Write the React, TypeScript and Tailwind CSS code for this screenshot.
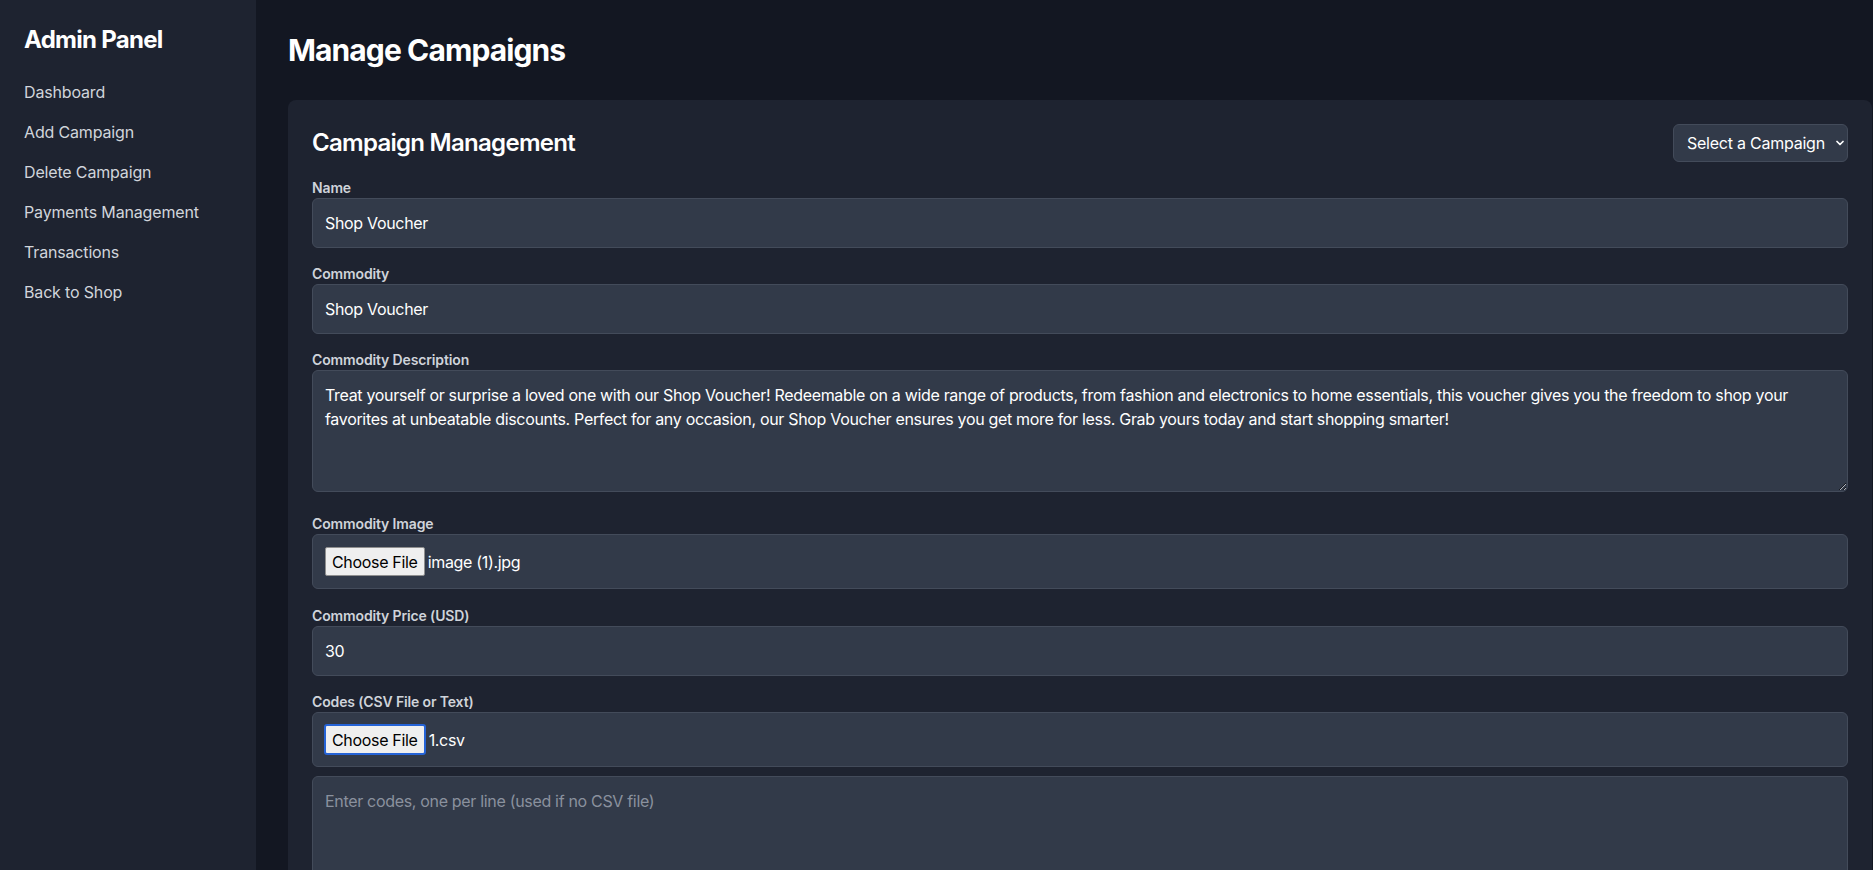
import { ChevronDown } from "lucide-react";

const description =
  "Treat yourself or surprise a loved one with our Shop Voucher! Redeemable on a wide range of products, from fashion and electronics to home essentials, this voucher gives you the freedom to shop your favorites at unbeatable discounts. Perfect for any occasion, our Shop Voucher ensures you get more for less. Grab yours today and start shopping smarter!";

const navItems = ["Dashboard", "Add Campaign", "Delete Campaign", "Payments Management", "Transactions", "Back to Shop"];

function FileField({ fileName, focused }: { fileName: string; focused?: boolean }) {
  return (
    <div className="flex items-center gap-[3px] w-full px-3 py-3 bg-[#323a49] border border-[#434b5a] rounded-md text-white">
      <button
        className={
          focused
            ? "h-[31px] -my-[1px] -ml-[1px] px-[6px] bg-[#efefef] text-black text-base leading-5 tracking-[-0.02em] rounded-[3px] border-2 border-[#2563d6]"
            : "h-[29px] px-[6px] bg-[#efefef] text-black text-base leading-5 tracking-[-0.02em] rounded-[2px] border border-[#8f8f8f]"
        }
      >
        Choose File
      </button>
      <span className="text-base tracking-[-0.02em]">{fileName}</span>
    </div>
  );
}

function Label({ children }: { children: React.ReactNode }) {
  return (
    <label className="block text-sm leading-5 font-semibold tracking-[-0.01em] text-[#cfd3da]">{children}</label>
  );
}

const inputClass =
  "block w-full px-3 py-3 bg-[#323a49] border border-[#434b5a] rounded-md text-base tracking-[-0.02em] text-white";

export default function App() {
  return (
    <div className="flex h-[870px] overflow-hidden font-['Inter',sans-serif] bg-[#131722]">
      {/* Sidebar */}
      <aside className="w-64 shrink-0 bg-[#1e2330] p-6">
        <h2 className="text-2xl font-bold tracking-[-0.03em] text-white mb-4">Admin Panel</h2>
        <nav className="flex flex-col">
          {navItems.map((item) => (
            <a key={item} href="#" className="py-2 text-base tracking-[-0.01em] text-[#d1d5db]">
              {item}
            </a>
          ))}
        </nav>
      </aside>

      {/* Main */}
      <main className="flex-1 pl-8 pr-[1px] pt-8">
        <h1 className="text-3xl font-bold tracking-[-0.03em] text-white mb-8">Manage Campaigns</h1>

        <div className="bg-[#1e2330] rounded-lg p-6">
          <div className="flex items-center justify-between mb-4">
            <h2 className="text-2xl font-semibold tracking-[-0.03em] text-white">Campaign Management</h2>
            <div className="relative">
              <select className="appearance-none h-[38px] pl-[13px] pr-[22px] bg-[#323a49] border border-[#434b5a] rounded-md text-base tracking-[-0.015em] text-white">
                <option>Select a Campaign</option>
              </select>
              <ChevronDown
                className="absolute right-[2px] top-[13px] w-[12px] h-[12px] text-white pointer-events-none"
                strokeWidth={3.5}
              />
            </div>
          </div>

          <div className="mb-4">
            <Label>Name</Label>
            <input defaultValue="Shop Voucher" className={inputClass} />
          </div>

          <div className="mb-4">
            <Label>Commodity</Label>
            <input defaultValue="Shop Voucher" className={inputClass} />
          </div>

          <div className="mb-[22px]">
            <Label>Commodity Description</Label>
            <textarea rows={4} defaultValue={description} className={inputClass + " leading-6"} />
          </div>

          <div className="mb-[17px]">
            <Label>Commodity Image</Label>
            <FileField fileName="image (1).jpg" />
          </div>

          <div className="mb-4">
            <Label>Commodity Price (USD)</Label>
            <input defaultValue="30" className={inputClass} />
          </div>

          <div>
            <Label>Codes (CSV File or Text)</Label>
            <FileField fileName="1.csv" focused />
            <textarea
              rows={6}
              placeholder="Enter codes, one per line (used if no CSV file)"
              className={inputClass + " mt-[9px] leading-6 placeholder:text-[#8a919e]"}
            />
          </div>
        </div>
      </main>
    </div>
  );
}
